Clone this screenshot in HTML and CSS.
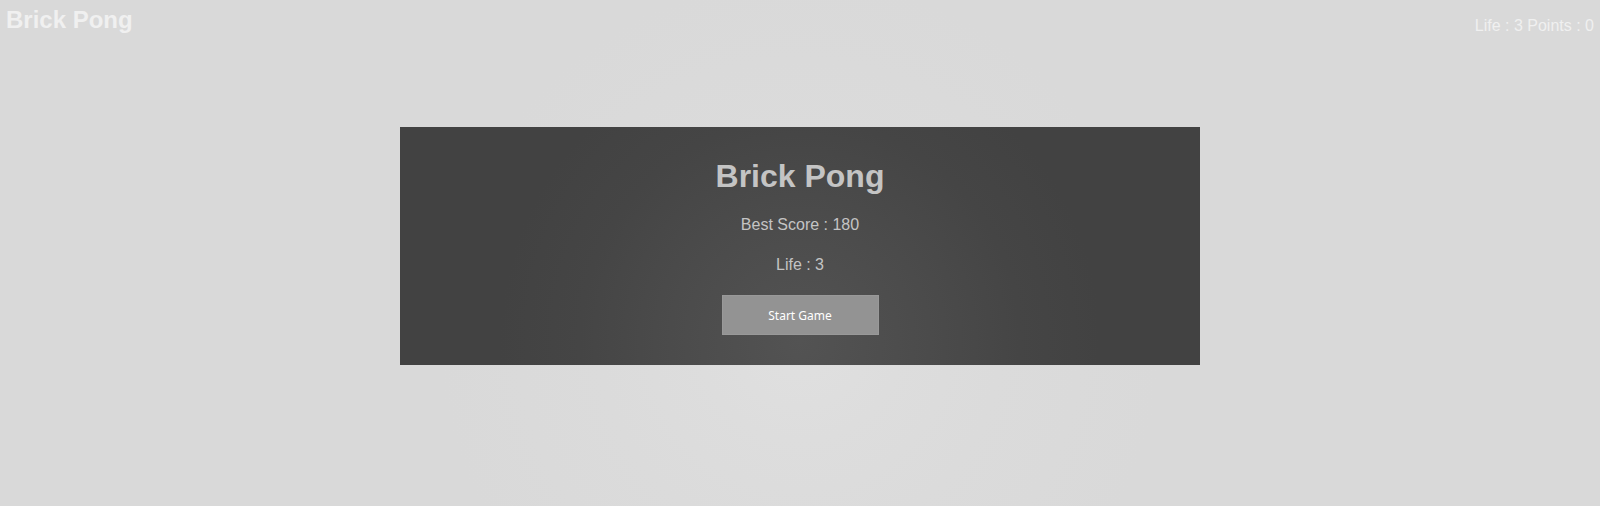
FILE: index.html
```html
<!DOCTYPE html>
<html>
<head>
<meta charset="utf-8">
<title>Brick Pong</title>
<link rel="stylesheet" href="styles.css">
</head>
<body>
<header class="topbar">
  <h2 class="brand">Brick Pong</h2>
  <div class="status">Life : 3 Points : 0</div>
</header>
<main class="panel">
  <h1 class="panel-title">Brick Pong</h1>
  <p class="panel-line best">Best Score : 180</p>
  <p class="panel-line life">Life : 3</p>
  <button class="start-btn">Start Game</button>
</main>
</body>
</html>
```
FILE: styles.css
```css
html, body {
  margin: 0;
  padding: 0;
  height: 100%;
}
body {
  font-family: "Liberation Sans", Arial, sans-serif;
  background: radial-gradient(circle at 800px 340px, #e0e0e0 0px, #dddddd 100px, #dbdbdb 200px, #d9d9d9 360px);
  overflow: hidden;
}
.topbar {
  display: flex;
  justify-content: space-between;
  align-items: flex-start;
  padding: 0 6px;
  height: 127px;
  box-sizing: border-box;
}
.brand {
  margin: 0;
  padding-top: 6px;
  font-size: 24px;
  font-weight: bold;
  line-height: 28px;
  color: #f0f0f0;
}
.status {
  padding-top: 17px;
  font-size: 16px;
  line-height: 18px;
  color: #f0f0f0;
}
.panel {
  width: 800px;
  height: 238px;
  margin: 0 auto;
  box-sizing: border-box;
  padding-top: 31px;
  display: flex;
  flex-direction: column;
  align-items: center;
  background: radial-gradient(circle at 400px 213px, #535353 0px, #4b4b4b 130px, #454545 220px, #424242 300px);
}
.panel-title {
  margin: 0;
  font-size: 32px;
  line-height: 37px;
  font-weight: bold;
  color: #c4c4c4;
}
.panel-line {
  margin: 0;
  font-size: 16px;
  line-height: 18px;
  color: #c4c4c4;
}
.best {
  margin-top: 21px;
}
.life {
  margin-top: 22px;
}
.start-btn {
  margin-top: 21px;
  width: 157px;
  height: 40px;
  background: #939393;
  border: 1px solid #999999;
  color: #ffffff;
  font-family: "Noto Sans", "Open Sans", sans-serif;
  font-size: 12px;
  font-weight: 400;
  padding: 0;
}
```
